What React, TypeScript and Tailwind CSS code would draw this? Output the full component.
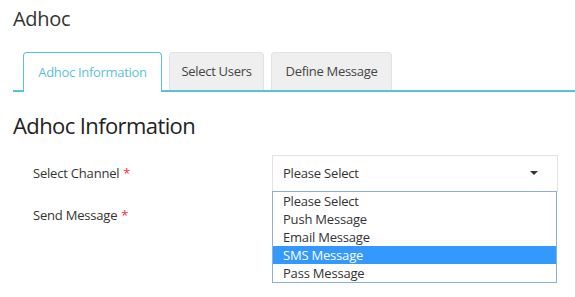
import React from "react";

const tabs = [
  { label: "Adhoc Information", w: "w-[139px]" },
  { label: "Select Users", w: "w-[95px]" },
  { label: "Define Message", w: "w-[121px]" },
];
const options = ["Please Select", "Push Message", "Email Message", "SMS Message", "Pass Message"];

const App = () => {
  return (
    <div
      className="w-[575px] h-[297px] bg-white text-[#333] overflow-hidden"
      style={{ fontFamily: '"Open Sans", "Noto Sans", sans-serif' }}
    >
      {/* Judul halaman */}
      <h1 className="pl-[13px] pt-[5px] text-[20px] leading-[28px] tracking-[-0.3px] text-[#333]">Adhoc</h1>

      {/* Tab */}
      <div className="ml-[13px] mt-[19px] flex gap-[7px] pl-[10px] border-b-2 border-[#5bc0de] h-[40px] tracking-[-0.3px]">
        {tabs.map((t, i) =>
          i === 0 ? (
            <div
              key={t.label}
              className={`${t.w} h-[40px] -mb-[2px] flex items-center justify-center text-[13px] text-[#5bc0de] bg-white border border-b-0 border-[#5bc0de] rounded-t-[4px]`}
            >
              {t.label}
            </div>
          ) : (
            <div
              key={t.label}
              className={`${t.w} h-[38px] flex items-center justify-center text-[13px] text-[#444] bg-[#efefef] border border-b-0 border-[#e2e2e2] rounded-t-[4px]`}
            >
              {t.label}
            </div>
          )
        )}
      </div>

      {/* Konten */}
      <h2 className="pl-[13px] mt-[18px] text-[22px] leading-[30px] tracking-[-0.6px] text-[#222]">Adhoc Information</h2>

      <div className="flex mt-[15px] tracking-[-0.2px]">
        <div className="w-[272px] pl-[33px] text-[13px]">
          <div className="h-[37px] flex items-center">
            Select Channel <span className="text-red-500 ml-[4px]">*</span>
          </div>
          <div className="h-[25px] mt-[11px] flex items-center">
            Send Message <span className="text-red-500 ml-[4px]">*</span>
          </div>
        </div>
        <div className="w-[286px]">
          <div className="h-[37px] border border-[#e3e3e3] flex items-center justify-between pl-[10px] pr-[19px] text-[13px]">
            <span>Please Select</span>
            <svg width="8" height="5" viewBox="0 0 8 5">
              <path d="M0 0h8L4 4z" fill="#333" />
            </svg>
          </div>
          <div className="border border-[#8fb0d6] -mt-px w-[285px]">
            {options.map((o) => (
              <div
                key={o}
                className={
                  o === "SMS Message"
                    ? "h-[18px] leading-[18px] pl-[10px] text-[13px] bg-[#3399ff] text-white"
                    : "h-[18px] leading-[18px] pl-[10px] text-[13px] text-[#333]"
                }
              >
                {o}
              </div>
            ))}
          </div>
        </div>
      </div>
    </div>
  );
};

export default App;
